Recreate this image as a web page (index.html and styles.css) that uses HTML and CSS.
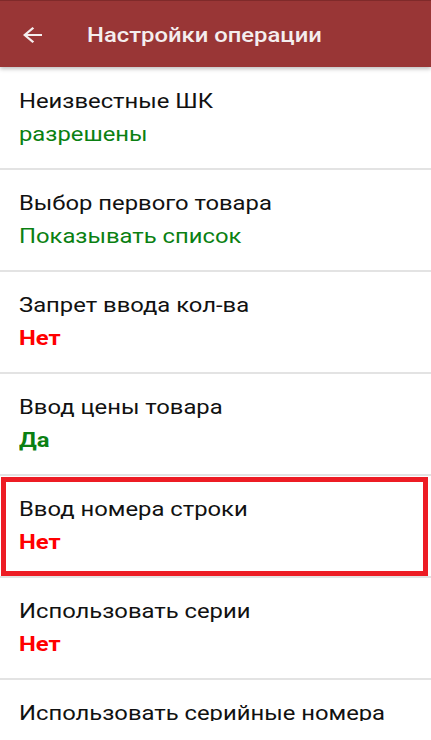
FILE: index.html
```html
<!DOCTYPE html>
<html>
<head>
<meta charset="UTF-8">
<title>Настройки операции</title>
<link rel="stylesheet" href="styles.css">
</head>
<body>
<div class="toolbar">
	<span class="nazad">
		<svg width="19" height="16" viewBox="4 4 16 16" preserveAspectRatio="none"><path fill="#f4eeee" d="M20 11H7.83l5.59-5.59L12 4l-8 8 8 8 1.41-1.41L7.83 13H20v-2z"/></svg>
	</span>
	<h1>Настройки операции</h1>
</div>
<div class="lista">
	<div class="rivi">
		<div class="nimi">Неизвестные ШК</div>
		<div class="arvo vihrea">разрешены</div>
	</div>
	<div class="rivi">
		<div class="nimi">Выбор первого товара</div>
		<div class="arvo vihrea">Показывать список</div>
	</div>
	<div class="rivi">
		<div class="nimi">Запрет ввода кол-ва</div>
		<div class="arvo punainen lihava">Нет</div>
	</div>
	<div class="rivi">
		<div class="nimi">Ввод цены товара</div>
		<div class="arvo vihrea lihava">Да</div>
	</div>
	<div class="rivi valittu">
		<div class="nimi">Ввод номера строки</div>
		<div class="arvo punainen lihava">Нет</div>
	</div>
	<div class="rivi">
		<div class="nimi">Использовать серии</div>
		<div class="arvo punainen lihava">Нет</div>
	</div>
	<div class="rivi">
		<div class="nimi">Использовать серийные номера</div>
		<div class="arvo punainen lihava">Нет</div>
	</div>
</div>
</body>
</html>
```
FILE: styles.css
```css
body {
	margin: 0;
	font-family: Roboto, "Liberation Sans", sans-serif;
	background: #fff;
	overflow: hidden;
	height: 740px;
}

/* kuvakaappaus on venytetty vaakasuunnassa, siksi scaleX */
.toolbar {
	position: relative;
	z-index: 2;
	height: 66px;
	border-top: 1px solid #7f2a2a;
	background-color: #993636;
	display: flex;
	align-items: center;
	box-shadow: 0 2px 4px rgba(0,0,0,0.25);
}
.nazad {
	display: flex;
	margin-left: 23px;
	margin-top: 2px;
}
.toolbar h1 {
	margin: 1px 0 0 45px;
	font-size: 20.2px;
	font-weight: 500;
	color: #f4eeee;
	white-space: nowrap;
	transform: scaleX(1.18);
	transform-origin: left center;
}

.lista {
	height: 654px;
	overflow: hidden;
}
.rivi {
	position: relative;
	padding: 19px 19px 20px 19px;
	border-bottom: 2px solid #e3e3e3;
}
.rivi:first-child {
	padding-top: 20px;
}
.nimi, .arvo {
	font-size: 20px;
	line-height: 28px;
	white-space: nowrap;
	transform: scaleX(1.19);
	transform-origin: left center;
}
.nimi {
	color: #111;
}
.arvo {
	margin-top: 5px;
}
.vihrea {
	color: #0a8012;
}
.punainen {
	color: #ff0000;
}
.lihava {
	font-weight: bold;
}

.valittu::after {
	content: "";
	position: absolute;
	left: 1px;
	right: 3px;
	top: 1px;
	bottom: 0;
	border: 5px solid #ed1c24;
}
```
